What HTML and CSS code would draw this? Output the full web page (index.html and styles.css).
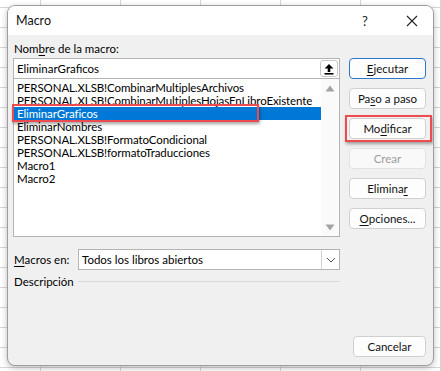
FILE: index.html
```html
<!DOCTYPE html>
<html lang="es">
<head>
<meta charset="utf-8">
<title>Macro</title>
<link rel="stylesheet" href="styles.css">
</head>
<body>
<div class="dialog">
  <div class="titlebar">
    <span class="title">Macro</span>
    <span class="help">?</span>
    <span class="close">
      <svg width="12" height="12" viewBox="0 0 12 12"><path d="M1 1 L11 11 M11 1 L1 11" stroke="#222" stroke-width="1.1" fill="none"/></svg>
    </span>
  </div>
  <div class="content">
    <div class="main">
      <div class="left">
        <div class="label">Nom<u>b</u>re de la macro:</div>
        <div class="namebox">
          <span class="nametext">EliminarGraficos</span>
          <span class="upbtn">
            <svg width="12" height="12" viewBox="0 0 12 12"><path d="M6 1 L10.5 5.5 L7.3 5.5 L7.3 9 L4.7 9 L4.7 5.5 L1.5 5.5 Z" fill="#000"/><rect x="1.5" y="10" width="9" height="1.6" fill="#000"/></svg>
          </span>
        </div>
        <div class="list">
          <div class="items">
            <div class="item">PERSONAL.XLSB!CombinarMultiplesArchivos</div>
            <div class="item">PERSONAL.XLSB!CombinarMultiplesHojasEnLibroExistente</div>
            <div class="item selected">EliminarGraficos</div>
            <div class="item">EliminarNombres</div>
            <div class="item">PERSONAL.XLSB!FormatoCondicional</div>
            <div class="item">PERSONAL.XLSB!formatoTraducciones</div>
            <div class="item">Macro1</div>
            <div class="item">Macro2</div>
          </div>
          <div class="scroll">
            <svg width="10" height="7" viewBox="0 0 10 7"><path d="M5 0.5 L9.5 6.5 L0.5 6.5 Z" fill="#a3a3a3"/></svg>
            <svg width="10" height="7" viewBox="0 0 10 7"><path d="M0.5 0.5 L9.5 0.5 L5 6.5 Z" fill="#a3a3a3"/></svg>
          </div>
          <div class="mark mark-list"></div>
        </div>
        <div class="macros-row">
          <span class="row-label"><u>M</u>acros en:</span>
          <div class="select">
            <span class="select-text">Todos los libros abiertos</span>
            <span class="drop">
              <svg width="10" height="6" viewBox="0 0 10 6"><path d="M1 1 L5 5 L9 1" stroke="#555" stroke-width="1" fill="none"/></svg>
            </span>
          </div>
        </div>
        <div class="desc-row">
          <span class="row-label">Descripción</span>
          <span class="rule"></span>
        </div>
      </div>
      <div class="right">
        <div class="btn default"><u>E</u>jecutar</div>
        <div class="btn">Pa<u>s</u>o a paso</div>
        <div class="btn-wrap">
          <div class="btn">Mo<u>d</u>ificar</div>
          <div class="mark mark-btn"></div>
        </div>
        <div class="btn disabled">Crear</div>
        <div class="btn">Elimina<u>r</u></div>
        <div class="btn"><u>O</u>pciones...</div>
      </div>
    </div>
    <div class="footer">
      <div class="btn cancel">Cancelar</div>
    </div>
  </div>
</div>
</body>
</html>
```

FILE: styles.css
```css
* { box-sizing: border-box; }
html, body { margin: 0; padding: 0; }
body {
  width: 441px;
  height: 371px;
  overflow: hidden;
  background-color: #ffffff;
  background-image:
    linear-gradient(to right, #d6d6d6 1px, transparent 1px),
    linear-gradient(to bottom, #d6d6d6 1px, transparent 1px);
  background-size: 80px 20px, 80px 20px;
  background-position: 40px 0, 0 7px;
  font-family: Lato, "Noto Sans", sans-serif;
  font-size: 11.5px;
  color: #000;
  padding: 5px 0 0 7px;
}
u { text-decoration: underline; text-underline-offset: 2px; }

.dialog {
  width: 427px;
  height: 361px;
  background: #f0f0f0;
  border: 1px solid #9c9c9c;
  border-radius: 8px;
  box-shadow: 0 2px 6px rgba(0,0,0,0.25);
  display: flex;
  flex-direction: column;
  overflow: hidden;
}
.titlebar {
  height: 29px;
  background: #ffffff;
  display: flex;
  align-items: center;
  padding-left: 8px;
  flex-shrink: 0;
}
.title { flex: 1; font-size: 12.5px; color: #111; }
.help { width: 12px; text-align: center; margin-right: 35px; font-size: 13px; color: #222; }
.close { width: 12px; height: 12px; display: flex; margin-right: 15px; }

.content {
  flex: 1;
  display: flex;
  flex-direction: column;
  padding: 6px 7px 8px 5px;
}
.main { display: flex; gap: 9px; }
.left { width: 327px; display: flex; flex-direction: column; }
.label { height: 16px; line-height: 16px; padding-left: 1px; }

.namebox {
  margin-top: 1px;
  height: 21px;
  background: #fff;
  border: 1px solid #b4b4b4;
  display: flex;
  align-items: center;
  padding-left: 3px;
  padding-right: 1px;
  position: relative;
  z-index: 1;
}
.nametext { flex: 1; }
.upbtn {
  width: 18px;
  height: 17px;
  border: 1px solid #c8c8c8;
  border-radius: 3px;
  background: #fff;
  display: flex;
  align-items: center;
  justify-content: center;
}

.list {
  margin-top: -1px;
  height: 159px;
  background: #fff;
  border: 1px solid #b4b4b4;
  display: flex;
  position: relative;
}
.items { width: 307px; padding-top: 2px; }
.item { height: 13px; line-height: 13px; padding-left: 3px; white-space: nowrap; overflow: hidden; letter-spacing: -0.1px; }
.item.selected { background: #0078d7; color: #fff; }
.scroll {
  flex: 1;
  background: #fafafa;
  display: flex;
  flex-direction: column;
  justify-content: space-between;
  align-items: center;
  padding: 6px 0 5px;
}

.mark {
  position: absolute;
  border: 2px solid #ec4b4f;
  box-shadow: 1px 2px 3px rgba(0,0,0,0.35);
  pointer-events: none;
}
.mark-list { left: -2px; top: 25px; width: 247px; height: 18px; }

.macros-row {
  margin-top: 12px;
  display: flex;
  align-items: center;
}
.row-label { width: 65px; padding-left: 1px; white-space: nowrap; }
.select {
  flex: 1;
  height: 21px;
  background: #fff;
  border: 1px solid #b4b4b4;
  display: flex;
  align-items: center;
  padding-left: 3px;
}
.select-text { flex: 1; }
.drop {
  width: 18px;
  height: 19px;
  border-left: 1px solid #d4d4d4;
  display: flex;
  align-items: center;
  justify-content: center;
}
.desc-row {
  margin-top: 3px;
  height: 16px;
  display: flex;
  align-items: center;
}
.rule { flex: 1; height: 1px; background: #d9d9d9; }

.right {
  width: 77px;
  margin-top: 17px;
  display: flex;
  flex-direction: column;
  gap: 9px;
}
.btn {
  height: 21px;
  background: #fdfdfd;
  border: 1px solid #d0d0d0;
  border-radius: 4px;
  display: flex;
  align-items: center;
  justify-content: center;
  color: #111;
}
.btn.default { border-color: #2b78c8; }
.btn.disabled { color: #9d9d9d; border-color: #e2e2e2; background: #f9f9f9; }
.btn-wrap { position: relative; }
.mark-btn { left: -4px; top: -3px; width: 87px; height: 27px; }

.footer { margin-top: auto; display: flex; justify-content: flex-end; }
.btn.cancel { width: 73px; }
```
